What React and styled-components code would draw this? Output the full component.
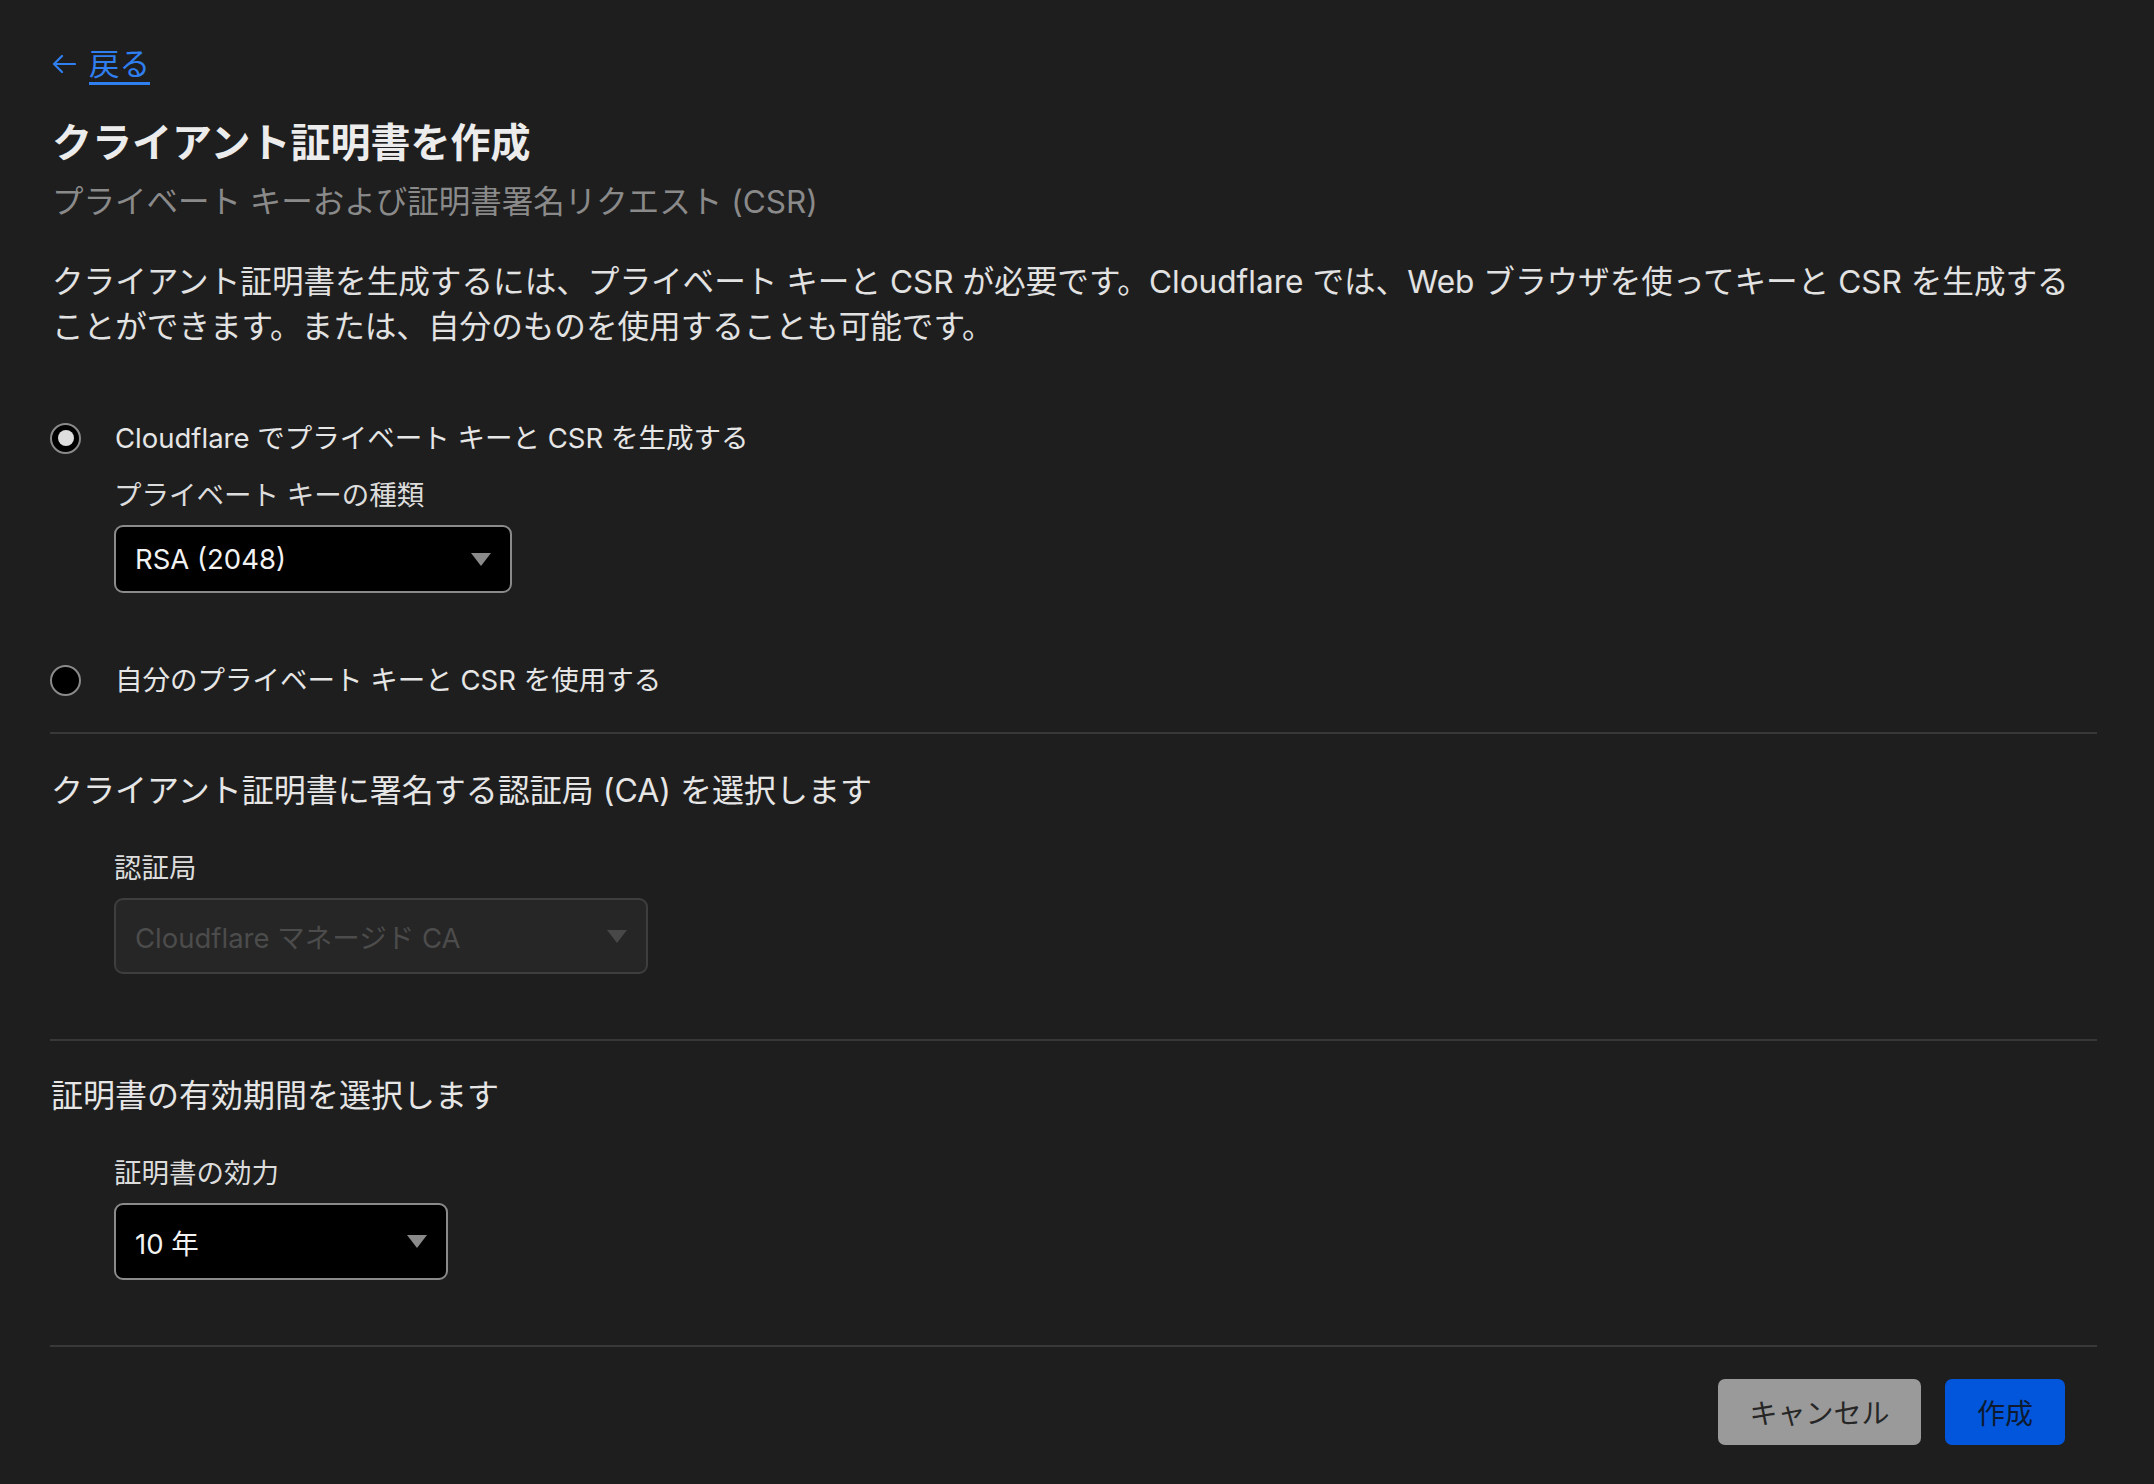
import React, { useState } from "react"
import styled, { createGlobalStyle } from "styled-components"

const GlobalStyle = createGlobalStyle`
  html, body {
    margin: 0;
    padding: 0;
    background: #1e1e1e;
  }
  body {
    font-family: Inter, "Noto Sans CJK JP", sans-serif;
    color: #e6e6e6;
  }
`

const Page = styled.main`
  min-height: 1484px;
  box-sizing: border-box;
  padding: 44px 57px 40px 50px;
  background: #1e1e1e;
`

const BackLink = styled.a`
  display: inline-flex;
  align-items: center;
  gap: 13px;
  height: 40px;
  margin-left: 2px;
  color: #2f7ff0;
  font-size: 30.5px;
  line-height: 40px;
  cursor: pointer;
  text-decoration: none;
`

const BackText = styled.span`
  text-decoration: underline;
  text-decoration-thickness: 3px;
  text-underline-offset: 7px;
`

const Title = styled.h1`
  margin: 33px 0 0 2px;
  font-size: 40px;
  line-height: 52px;
  font-weight: 700;
  color: #ececec;
`

const Subtitle = styled.p`
  margin: 11px 0 0 2px;
  font-size: 31.5px;
  line-height: 44px;
  color: #8a8a8a;
`

const Description = styled.p`
  margin: 35px 0 0 2px;
  font-size: 31.6px;
  line-height: 45px;
  color: #e2e2e2;
  white-space: nowrap;
`

const Block = styled.section`
  padding: ${props => props.$top}px 0 ${props => props.$bottom}px;
  border-bottom: 2px solid #383838;
`

const RadioRow = styled.label`
  display: flex;
  align-items: center;
  gap: 34px;
  height: 40px;
  cursor: pointer;
  margin-top: ${props => props.$gap || 0}px;
`

const RadioCircle = styled.span`
  box-sizing: border-box;
  width: 31px;
  height: 31px;
  border-radius: 50%;
  border: 2px solid #8a8a8a;
  background: #000;
  display: flex;
  align-items: center;
  justify-content: center;

  &::after {
    content: "";
    width: 16px;
    height: 16px;
    border-radius: 50%;
    background: #dedede;
    display: ${props => (props.$checked ? "block" : "none")};
  }
`

const RadioLabel = styled.span`
  font-size: 27.5px;
  line-height: 40px;
  color: #e6e6e6;
`

const Field = styled.div`
  margin: ${props => props.$top}px 0 0 64px;
`

const FieldLabel = styled.div`
  font-size: 27.5px;
  line-height: 38px;
  color: #dcdcdc;
`

const Select = styled.div`
  box-sizing: border-box;
  margin-top: 11px;
  width: ${props => props.$width}px;
  height: ${props => props.$height}px;
  display: flex;
  align-items: center;
  justify-content: space-between;
  padding: 0 19px 0 19px;
  border-radius: 9px;
  border: 2px solid ${props => (props.$disabled ? "#3e3e3e" : "#8a8a8a")};
  background: ${props => (props.$disabled ? "#262626" : "#000")};
  color: ${props => (props.$disabled ? "#4c4c4c" : "#f2f2f2")};
  font-size: 27.5px;
  cursor: ${props => (props.$disabled ? "not-allowed" : "pointer")};
`

const Caret = styled.span`
  width: 0;
  height: 0;
  border-left: 10px solid transparent;
  border-right: 10px solid transparent;
  border-top: 13px solid ${props => (props.$disabled ? "#484848" : "#8a8a8a")};
`

const SectionHeading = styled.h2`
  margin: 0 0 0 1px;
  font-size: 32px;
  line-height: 44px;
  font-weight: 400;
  color: #e6e6e6;
`

const Footer = styled.footer`
  display: flex;
  justify-content: flex-end;
  gap: 24px;
  padding: 32px 32px 0 0;
`

const Button = styled.button`
  height: 66px;
  padding: 0 24px;
  min-width: ${props => (props.$primary ? 120 : 203)}px;
  border: none;
  border-radius: 7px;
  background: ${props => (props.$primary ? "#0156dc" : "#9a9a9a")};
  color: ${props => (props.$primary ? "#0d1a30" : "#262626")};
  font-family: inherit;
  font-size: 28px;
  cursor: pointer;
`

const ArrowLeft = () => (
  <svg width="24" height="20" viewBox="0 0 24 20" fill="none">
    <path
      d="M23 10H2M10 2L2 10l8 8"
      stroke="#2f7ff0"
      strokeWidth="2.2"
      strokeLinecap="round"
      strokeLinejoin="round"
    />
  </svg>
)

const App = () => {
  const [mode, setMode] = useState("cloudflare")

  return (
    <Page>
      <GlobalStyle />
      <BackLink>
        <ArrowLeft />
        <BackText>戻る</BackText>
      </BackLink>
      <Title>クライアント証明書を作成</Title>
      <Subtitle>プライベート キーおよび証明書署名リクエスト (CSR)</Subtitle>
      <Description>
        クライアント証明書を生成するには、プライベート キーと CSR が必要です。Cloudflare では、Web ブラウザを使ってキーと CSR を生成する
        <br />
        ことができます。または、自分のものを使用することも可能です。
      </Description>

      <Block $top={69} $bottom={32}>
        <RadioRow onClick={() => setMode("cloudflare")}>
          <RadioCircle $checked={mode === "cloudflare"} />
          <RadioLabel>Cloudflare でプライベート キーと CSR を生成する</RadioLabel>
        </RadioRow>
        <Field $top={18}>
          <FieldLabel>プライベート キーの種類</FieldLabel>
          <Select $width={398} $height={68}>
            <span>RSA (2048)</span>
            <Caret />
          </Select>
        </Field>
        <RadioRow $gap={67} onClick={() => setMode("own")}>
          <RadioCircle $checked={mode === "own"} />
          <RadioLabel>自分のプライベート キーと CSR を使用する</RadioLabel>
        </RadioRow>
      </Block>

      <Block $top={35} $bottom={65}>
        <SectionHeading>クライアント証明書に署名する認証局 (CA) を選択します</SectionHeading>
        <Field $top={36}>
          <FieldLabel>認証局</FieldLabel>
          <Select $width={534} $height={76} $disabled>
            <span>Cloudflare マネージド CA</span>
            <Caret $disabled />
          </Select>
        </Field>
      </Block>

      <Block $top={33} $bottom={65}>
        <SectionHeading>証明書の有効期間を選択します</SectionHeading>
        <Field $top={36}>
          <FieldLabel>証明書の効力</FieldLabel>
          <Select $width={334} $height={77}>
            <span>10 年</span>
            <Caret />
          </Select>
        </Field>
      </Block>

      <Footer>
        <Button>キャンセル</Button>
        <Button $primary>作成</Button>
      </Footer>
    </Page>
  )
}

export default App
